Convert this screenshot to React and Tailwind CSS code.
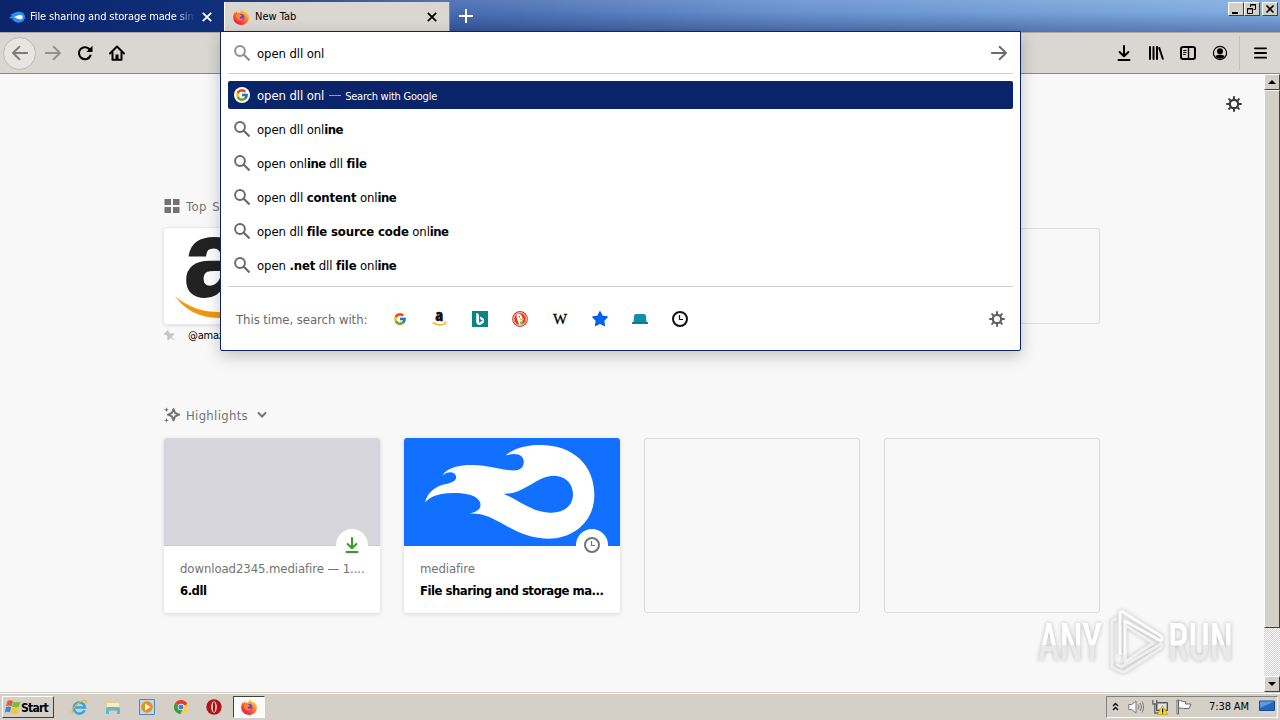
import { FcGoogle } from 'react-icons/fc';
import { BsBing } from 'react-icons/bs';

const suggestions = [
  [['open dll onl'], ['ine', true]],
  [['open onl'], ['ine', true], [' dll '], ['file', true]],
  [['open dll '], ['content', true], [' onl'], ['ine', true]],
  [['open dll '], ['file source code', true], [' onl'], ['ine', true]],
  [['open '], ['.net', true], [' dll '], ['file', true], [' onl'], ['ine', true]],
];

const raised = 'border border-t-white border-l-white border-r-[#404040] border-b-[#404040] bg-[#d4d0c8]';

function SearchIcon({ className }) {
  return (
    <svg viewBox="0 0 16 16" className={`h-4 w-4 shrink-0 ${className}`} fill="none" stroke="currentColor">
      <circle cx="6" cy="6" r="4.900" strokeWidth="2" />
      <path d="M9.800 9.800l5 5" strokeWidth="2.300" strokeLinecap="round" />
    </svg>
  );
}

function GearIcon({ className }) {
  return (
    <svg viewBox="0 0 16 16" className={`h-4 w-4 ${className}`} fill="none" stroke="currentColor" strokeLinecap="round">
      <circle cx="8" cy="8" r="4.200" strokeWidth="2.200" />
      <path
        d="M8 1v2.500M8 12.500V15M1 8h2.500M12.500 8H15M3.100 3.100l1.600 1.600M11.300 11.300l1.600 1.600M12.900 3.100l-1.600 1.600M4.700 11.300l-1.600 1.600"
        strokeWidth="2"
      />
    </svg>
  );
}

function ClockIcon({ className }) {
  return (
    <svg viewBox="0 0 16 16" className={`h-4 w-4 ${className}`} fill="none" stroke="currentColor">
      <circle cx="8" cy="8" r="7" strokeWidth="2" />
      <path d="M7.500 4v4.500H11" strokeWidth="1.200" />
    </svg>
  );
}

function DownloadIcon({ className }) {
  return (
    <svg
      viewBox="0 0 16 16"
      className={`h-4 w-4 ${className}`}
      fill="none"
      stroke="currentColor"
      strokeWidth="2"
      strokeLinecap="round"
      strokeLinejoin="round"
    >
      <path d="M8 1v10M3.600 7L8 11.300 12.400 7M2.500 15h11" />
    </svg>
  );
}

function ArrowIcon({ className }) {
  return (
    <svg
      viewBox="0 0 16 16"
      className={`h-4 w-4 ${className}`}
      fill="none"
      stroke="currentColor"
      strokeWidth="1.900"
      strokeLinecap="round"
      strokeLinejoin="round"
    >
      <path d="M.9 8h14M8.600 1.800L15 8l-6.400 6.200" />
    </svg>
  );
}

function CloseIcon({ className }) {
  return (
    <svg viewBox="0 0 10 10" className={`h-2.5 w-2.5 shrink-0 ${className}`} stroke="currentColor" strokeWidth="1.800">
      <path d="M.8.8l8.400 8.400M9.200.8L.8 9.200" />
    </svg>
  );
}

function FirefoxIcon({ className }) {
  return (
    <svg viewBox="0 0 16 16" className={className}>
      <defs>
        <linearGradient id="fox" x1="0.85" y1="0.1" x2="0.2" y2="0.95">
          <stop offset="0" stopColor="#ffd83a" />
          <stop offset="0.45" stopColor="#ff7a22" />
          <stop offset="0.8" stopColor="#f8323f" />
          <stop offset="1" stopColor="#e01a72" />
        </linearGradient>
      </defs>
      <path
        d="M9 .2c1 1 1.600 2 1.700 2.900 1-.2 1.600.4 2 .8-.1-.6-.2-1-.4-1.400C14.800 4 16 6.400 15.900 8.800 15.700 13 12.300 16 8.100 16 3.700 16 .3 12.800.2 8.600.1 6.400.9 4.400 2 2.900c0 .6.1 1 .3 1.300.5-.8 1.200-1.500 1.900-1.900-.1.700.1 1.300.5 1.700C6.800 3.600 8.600 2.700 9 .2z"
        fill="url(#fox)"
      />
      <circle cx="8.200" cy="8.300" r="3.200" fill="#7a3fd6" />
      <path d="M3.600 5.300c1.500-.8 3-.5 3.800.5l1.500.6c-.3 1-1.900 1-2.300 1.800-.2 1.700 2.600 2.500 4.500.8-1 3-6 3.500-7.600.3-.7-1.400-.6-2.900.1-4z" fill="#ff8a1f" />
    </svg>
  );
}

function AmazonIcon() {
  return (
    <svg viewBox="0 0 16 16" className="h-4 w-4">
      <text x="3.300" y="10" fontFamily="Open Sans" fontWeight="800" fontSize="15.500" textLength="8" lengthAdjust="spacingAndGlyphs" fill="#111" stroke="#111" strokeWidth=".4">
        a
      </text>
      <path d="M1 11.500c4 3 9 3 12.200.8" fill="none" stroke="#f5b22b" strokeWidth="1.600" />
      <path d="M11.800 11c1.200-.2 2-.2 2.500.1 0 1-.3 1.800-1 2.500" fill="none" stroke="#f5b22b" />
    </svg>
  );
}

function TitleBar() {
  return (
    <div className="flex h-8 shrink-0 bg-[linear-gradient(to_bottom,rgba(255,255,255,0.08),rgba(255,255,255,0)_35%,rgba(0,10,80,0.3)),linear-gradient(to_right,#0a246a_0,#0a246a_220px,#486db0_450px,#6a94cf_800px,#84b0e2_1280px)]">
      <div className="flex w-[224px] items-center bg-[linear-gradient(to_right,#0a246a,#10307c)] pt-0.5 pl-[9px] text-[11px] text-white">
        <svg viewBox="0 0 18 16" className="h-4 w-[17px] shrink-0">
          <path d="M0 9c2-1.500 2-1.500 3-2.500C2 5.500 2 5.500 1.500 5 5 5 5.500 3 9.500 2.500 14 2 17 4.500 17 8s-3 6-7 6c-3.500 0-4.500-2-7-3l2-1z" fill="#2c8fef" />
          <path d="M5 8c3-.3 4-2 6.500-2 2 0 3 1 3 2.200 0 1.300-1 2.200-3 2.200C9 10.400 8 8.800 5 8z" fill="#fff" />
        </svg>
        <span className="ml-1 w-[165px] overflow-hidden whitespace-nowrap tracking-[-0.12px] [mask-image:linear-gradient(to_right,#000_146px,transparent_165px)]">
          File sharing and storage made simple
        </span>
        <CloseIcon className="ml-[7px]" />
      </div>
      <div className="mt-0.5 flex w-[226px] items-center border-r border-l border-r-[#8b8883] border-l-white bg-[#dad7d2] pl-2 text-[11px] text-black">
        <FirefoxIcon className="h-4 w-4" />
        <span className="mt-px ml-1.5">New Tab</span>
        <CloseIcon className="mr-3 ml-auto" />
      </div>
      <svg viewBox="0 0 14 14" className="mt-[9px] ml-[9px] h-3.5 w-3.5" stroke="#fff" strokeWidth="2">
        <path d="M7 0v14M0 7h14" />
      </svg>
      <div className="mt-0.5 mr-[2px] ml-auto flex h-[14px]">
        <div className={`${raised} h-[14px] w-4`}>
          <svg viewBox="0 0 14 12" className="h-3 w-3.5">
            <path d="M3 9h6v2H3z" />
          </svg>
        </div>
        <div className={`${raised} h-[14px] w-4`}>
          <svg viewBox="0 0 14 12" className="h-3 w-3.5" fill="none" stroke="#000">
            <path d="M5.500 4V1.500h5v5H8.500M5 2h6M2.500 5.500h5v5h-5zM2 6h6" />
          </svg>
        </div>
        <div className={`${raised} ml-0.5 h-[14px] w-4`}>
          <svg viewBox="0 0 14 12" className="h-3 w-3.5" stroke="#000" strokeWidth="1.600">
            <path d="M3.500 2.500l7 7M10.500 2.500l-7 7" />
          </svg>
        </div>
      </div>
    </div>
  );
}

function Toolbar() {
  return (
    <div className="flex h-[42px] shrink-0 items-center border-t border-b border-t-[#aaa9a8] border-b-[#8b8883] bg-[#dad7d2] text-black">
      <div className="ml-[3px] flex h-[33px] w-[33px] items-center justify-center rounded-full border border-[#bdbab6] bg-[#e7e5e1]">
        <ArrowIcon className="rotate-180 text-[#7d7b78]" />
      </div>
      <ArrowIcon className="ml-[9px] text-[#92908d]" />
      <svg viewBox="0 0 16 16" className="ml-4 h-4 w-4" fill="none" stroke="currentColor" strokeWidth="2.100">
        <path d="M12.700 4.500A6 6 0 1 0 13.500 10.500" strokeLinecap="round" />
        <path d="M15.500.8v6.200H9.300z" fill="currentColor" stroke="none" />
      </svg>
      <svg viewBox="0 0 16 16" className="ml-4 h-4 w-4" fill="none" stroke="currentColor" strokeWidth="2" strokeLinejoin="round">
        <path d="M1 8.500L8 1.500l7 7" strokeLinecap="round" />
        <path d="M3.500 7v7.800h9V7" />
        <path d="M6.500 15V9.500h3V15z" fill="currentColor" stroke="none" />
      </svg>
      <div className="ml-auto flex items-center gap-4">
        <DownloadIcon />
        <svg viewBox="0 0 16 16" className="h-4 w-4" fill="none" stroke="currentColor" strokeWidth="2" strokeLinecap="round">
          <path d="M2 2v12M5.500 2v12M9 2v12M11.300 3l3.500 10.800" />
        </svg>
        <svg viewBox="0 0 16 16" className="h-4 w-4" fill="none" stroke="currentColor">
          <rect x="1" y="2" width="14" height="12" rx="2" strokeWidth="2" />
          <path d="M8.500 2v12" strokeWidth="1.400" />
          <path d="M3.200 5.500h3.300M3.200 7.500h3.300M3.200 9.500h2.500" />
        </svg>
        <svg viewBox="0 0 16 16" className="h-4 w-4">
          <circle cx="8" cy="8" r="6.600" fill="none" stroke="#000" strokeWidth="1.200" />
          <circle cx="8" cy="6.200" r="3" />
          <path d="M3.300 11.200c1.500-2 7.900-2 9.400 0C11.500 13 10 13.700 8 13.700s-3.500-.7-4.700-2.500z" />
        </svg>
      </div>
      <div className="ml-[11px] h-[34px] w-px bg-[#c3c0bb]" />
      <svg viewBox="0 0 14 14" className="mr-[13px] ml-3.5 h-3.5 w-[13px]" stroke="#000" strokeWidth="2" strokeLinecap="round">
        <path d="M1 2h12M1 7h12M1 12h12" />
      </svg>
    </div>
  );
}

function UrlPopup() {
  return (
    <div className="absolute top-[31px] left-[220px] flex h-[320px] w-[801px] flex-col rounded-b-[2px] border border-[#0a246a] bg-white px-[7px] text-[13px] text-black shadow-[0_5px_16px_rgba(0,0,0,0.22)]">
      <div className="flex h-[42px] shrink-0 items-center border-b border-[#cfcfcf] pr-[6px] pl-[6px]">
        <SearchIcon className="text-[#909090]" />
        <span className="mt-0.5 ml-[7px] tracking-[-0.1px]">open dll onl</span>
        <ArrowIcon className="ml-auto text-[#6b6b6b]" />
      </div>
      <div className="mt-[7px] flex h-7 shrink-0 items-center rounded-[2px] bg-[#0a246a] pl-[6px] text-white">
        <div className="flex h-4 w-4 items-center justify-center rounded-full bg-white">
          <FcGoogle className="h-3.5 w-3.5" />
        </div>
        <span className="mt-0.5 ml-[7px] tracking-[-0.1px]">open dll onl</span>
        <span className="mr-1 ml-[5px] h-px w-3 bg-[#8f9bc0]" />
        <span className="mt-[5px] text-[11px] tracking-[-0.24px]">Search with Google</span>
      </div>
      <div className="flex flex-col gap-1.5 pt-1.5">
        {suggestions.map((parts, i) => (
          <div key={i} className="flex h-7 items-center pl-[6px]">
            <SearchIcon className="text-[#6b6b6b]" />
            <span className="mt-0.5 ml-[7px] tracking-[-0.1px] whitespace-pre">
              {parts.map(([text, bold], j) =>
                bold ? (
                  <b key={j} className={text.length > 3 ? 'font-bold tracking-[-0.15px]' : 'font-bold tracking-[-0.55px]'}>
                    {text}
                  </b>
                ) : (
                  text
                ),
              )}
            </span>
          </div>
        ))}
      </div>
      <div className="mt-[7px] flex h-[65px] items-center border-t border-[#cfcfcf] pl-2">
        <span className="mt-0.5 w-[156px] tracking-[-0.06px] whitespace-nowrap text-[#696969]">This time, search with:</span>
        <div className="flex items-center gap-6">
          <div className="flex h-4 w-4 items-center justify-center">
            <FcGoogle className="h-3.5 w-3.5" />
          </div>
          <AmazonIcon />
          <div className="flex h-4 w-4 items-center justify-center bg-[#0c8484]">
            <BsBing className="h-3 w-3 text-white" />
          </div>
          <svg viewBox="0 0 16 16" className="h-4 w-4">
            <circle cx="8" cy="8" r="7.900" fill="#de3a1e" />
            <circle cx="8" cy="8" r="6.300" fill="none" stroke="#fff" strokeWidth=".9" />
            <path d="M4.800 3.500c2.500-1.300 5.400.5 5.700 3.500l-.3 6.300-3 .5C6 10 3.800 6 4.800 3.500z" fill="#fff" />
            <path d="M8 7.500l4.200.3-1 1.600-3.200-.2z" fill="#fdc20a" />
            <path d="M7.800 10.500l3.500.5-.5 2.300-3-.7z" fill="#5fb946" />
            <circle cx="7.300" cy="5.700" r=".7" fill="#2d4f8e" />
          </svg>
          <div className="flex h-4 w-4 items-center justify-center font-['Liberation_Serif',serif] text-[15px] tracking-normal">
            <span className="mt-0.5 [-webkit-text-stroke:0.3px_#000]">W</span>
          </div>
          <svg viewBox="0 0 16 16" className="h-4 w-4">
            <path
              d="M8 .8l2.200 4.500 4.900.7-3.500 3.500.8 5L8 12.200l-4.400 2.300.8-5L.9 6l4.900-.7z"
              fill="#0060f0"
              stroke="#0060f0"
              strokeWidth="1.400"
              strokeLinejoin="round"
            />
          </svg>
          <svg viewBox="0 0 16 16" className="h-4 w-4" fill="#0e8fa3">
            <path d="M1.500 11.500L2 5Q2.200 3 4.200 3h7.600Q13.800 3 14 5l.5 6.500z" />
            <path d="M0 11h16v2H0z" fill="#0a7f92" />
          </svg>
          <ClockIcon className="text-[#111]" />
        </div>
        <GearIcon className="mr-2 ml-auto text-[#606060]" />
      </div>
    </div>
  );
}

function HighlightCard({ site, title, image, badge }) {
  return (
    <div className="relative flex h-[175px] w-[216px] flex-col rounded-[3px] bg-white shadow-[0_1px_4px_rgba(12,12,13,0.15)]">
      <div className="h-[108px] overflow-hidden rounded-t-[3px]">{image}</div>
      <div className="absolute top-[91px] right-3 flex h-8 w-8 items-center justify-center rounded-full bg-white">{badge}</div>
      <div className="relative px-4 pt-[15px] leading-4">
        <div className="text-[13px] tracking-[-0.08px] whitespace-nowrap text-[#737373]">{site}</div>
        <div className="mt-1.5 text-[13px] font-bold tracking-[-0.5px] whitespace-nowrap text-black">{title}</div>
      </div>
    </div>
  );
}

function MediafireArt() {
  return (
    <svg viewBox="42 114 648 324" className="h-[108px] w-[216px] bg-[#1170ff]">
      <path
        d="M105 308C112 275 140 258 165 253C190 248 201 240 198 228C194 214 173 212 157 227C175 195 235 192 280 197C320 202 355 214 380 211C402 207 405 185 398 173C389 159 365 161 347 166C375 141 420 135 450 135C550 135 613 195 613 285C613 365 550 416 475 416C400 416 350 375 300 352C275 342 258 340 236 341C262 337 276 325 270 307C262 285 225 278 185 279C150 281 120 288 105 308Z"
        fill="#fff"
      />
      <path d="M340 281C400 285 440 227 492 227C527 227 549 252 549 282C549 317 522 338 485 338C430 340 385 300 340 281Z" fill="#1170ff" />
    </svg>
  );
}

function NewTabPage() {
  return (
    <div className="relative min-w-0 flex-1 bg-[#f8f8f8] pt-[116px] pl-[164px] text-[#737373]">
      <GearIcon className="absolute top-[22px] left-[1226px] text-[#3c3c3c]" />
      <div className="flex h-8 items-center text-[13px] tracking-[0.5px]">
        <svg viewBox="0 0 16 16" className="mr-1.5 h-4 w-4" fill="currentColor">
          <path d="M.5 1h6.500v6H.5zM9 1h6.500v6H9zM.5 9h6.500v6H.5zM9 9h6.500v6H9z" />
        </svg>
        <span className="mt-0.5 [word-spacing:1px]">Top Sites</span>
      </div>
      <div className="mt-[6px] flex gap-6">
        <div className="h-24 w-[216px] overflow-hidden rounded-[3px] bg-white shadow-[0_0_0_1px_#e9e9e9,0_1px_4px_rgba(12,12,13,0.15)]">
          <svg viewBox="0 0 216 96" className="h-24 w-[216px]">
            <text x="20" y="68" fontFamily="Liberation Sans" fontWeight="700" fontSize="108" fill="#222" stroke="#222" strokeWidth="2">
              a
            </text>
            <path d="M11 68c14 12 28 16 44 16 17 0 32-5 42-11v6c-14 8-28 11-42 11-20 0-35-9-44-22z" fill="#f0980c" />
          </svg>
        </div>
        <div className="h-24 w-[216px] rounded-[3px] border border-[#dcdcdc]" />
        <div className="h-24 w-[216px] rounded-[3px] border border-[#dcdcdc]" />
        <div className="h-24 w-[216px] rounded-[3px] border border-[#dcdcdc]" />
      </div>
      <div className="mt-1 flex h-4 items-center text-[11px] tracking-[-0.2px] text-black">
        <svg viewBox="0 0 12 12" className="mr-3 h-3 w-3 -rotate-45 text-[#c6c6c6]" fill="currentColor">
          <path d="M3 0h6v1.500H8v3l2.500 2v1.300h-4V12h-1V7.800h-4V6.500L4 4.500v-3H3z" />
        </svg>
        @amazon
      </div>
      <div className="mt-[55px] flex h-8 items-center text-[13px] tracking-[0.3px]">
        <svg viewBox="0 0 16 16" className="mr-1.5 h-4 w-4" fill="none" stroke="currentColor" strokeWidth="2" strokeLinejoin="round">
          <path d="M9.500 2l1.600 4 4 1.700-4 1.700-1.600 4-1.600-4-4-1.700 4-1.700z" />
          <path d="M2.500.3l.7 1.700 1.700.7-1.700.7-.7 1.600-.7-1.600L.1 2.700 1.800 2zM2.500 11l.7 1.700 1.700.7-1.700.7-.7 1.600-.7-1.600-1.700-.7 1.700-.7z" fill="currentColor" stroke="none" />
        </svg>
        <span className="mt-0.5">Highlights</span>
        <svg viewBox="0 0 10 10" className="ml-[9px] h-2.5 w-2.5" fill="none" stroke="currentColor" strokeWidth="2">
          <path d="M1.500 3L5 6.500 8.500 3" strokeLinecap="round" />
        </svg>
      </div>
      <div className="mt-[7px] flex gap-6">
        <HighlightCard
          site="download2345.mediafire — 1...."
          title="6.dll"
          image={<div className="h-full border-b border-[#c9c8cd] bg-[#d7d6dc]" />}
          badge={<DownloadIcon className="text-[#2fa01d]" />}
        />
        <HighlightCard
          site="mediafire"
          title="File sharing and storage ma..."
          image={<MediafireArt />}
          badge={<ClockIcon className="text-[#737373]" />}
        />
        <div className="h-[175px] w-[216px] rounded-[3px] border border-[#dcdcdc]" />
        <div className="h-[175px] w-[216px] rounded-[3px] border border-[#dcdcdc]" />
      </div>
    </div>
  );
}

function Scrollbar() {
  return (
    <div className="flex w-4 shrink-0 flex-col bg-[repeating-conic-gradient(#d4d0c8_0_25%,#fff_0_50%)] bg-[length:2px_2px]">
      <div className={`${raised} flex h-4 items-center justify-center`}>
        <svg viewBox="0 0 8 4" className="h-1 w-2">
          <path d="M4 0l4 4H0z" />
        </svg>
      </div>
      <div className={`${raised} h-[538px]`} />
      <div className={`${raised} mt-auto flex h-4 items-center justify-center`}>
        <svg viewBox="0 0 8 4" className="h-1 w-2">
          <path d="M0 0h8L4 4z" />
        </svg>
      </div>
    </div>
  );
}

function Watermark() {
  return (
    <svg
      viewBox="0 0 204 72"
      className="absolute top-[605px] left-[1033px] h-[72px] w-[204px] [filter:drop-shadow(0_0_2px_rgba(0,0,0,0.25))]"
      fontFamily="Roboto"
      fontSize="52"
      fontWeight="500"
    >
      <defs>
        <linearGradient id="wm" x1="0" y1="0" x2="0" y2="1">
          <stop offset="0.53" stopColor="#fff" />
          <stop offset="0.55" stopColor="#e9e9e9" />
        </linearGradient>
      </defs>
      <text x="5" y="55" textLength="64" lengthAdjust="spacingAndGlyphs" fill="url(#wm)">
        ANY
      </text>
      <text x="135" y="55" textLength="65" lengthAdjust="spacingAndGlyphs" fill="url(#wm)">
        RUN
      </text>
      <g fill="none" strokeLinejoin="round" strokeWidth="3">
        <path d="M87 50V8q0-2 3-1l38 24q2 3 0 5L92 16v38" stroke="#fbfbfb" />
        <path d="M92 20l28 18-28 19v-8" stroke="#f0f0f0" />
        <path d="M84 14q-5 0-5 4v44l10 5q2 0 4-1l35-23q2-2 0-4L88 62l-5-3" stroke="#efefef" />
      </g>
    </svg>
  );
}

function Taskbar() {
  return (
    <div className="flex h-7 shrink-0 items-center border-t border-[#d4d0c8] bg-[#d4d0c8] pt-px text-[11px] text-black shadow-[inset_0_1px_0_#fff]">
      <div className={`${raised} ml-0.5 flex h-[22px] w-[52px] items-center pl-0.5`}>
        <svg viewBox="0 0 16 16" className="h-4 w-4 shrink-0">
          <path d="M2.500 2c2-1.200 3.500-1 5.500 0L6.500 7.200c-1.500-1-3.500-1-5.500 0z" fill="#e8592b" />
          <path d="M8.500 2.500c2 1.200 4.500 1 7 0l-1.500 5.200c-2 1-4.500 1-7 0z" fill="#7cbc3c" />
          <path d="M1 8.300c2-1.200 3.500-1 5.300 0L4.800 13.500c-1.500-1-3-1-5 0z" fill="#3b87dc" />
          <path d="M7 8.700c2 1.200 4.500 1 7 0l-1.300 5.200c-2 1-4.500 1-7 0z" fill="#fbc52c" />
        </svg>
        <span className="mt-px text-[12px] font-bold tracking-[-0.75px]">Start</span>
      </div>
      <div className="ml-[17px] flex items-center gap-[18px]">
        <svg viewBox="0 0 16 16" className="h-4 w-4" fill="none">
          <path d="M13.600 11.200A5.600 5.600 0 1 1 14 8.500H4" stroke="#3aa5e4" strokeWidth="2.600" />
          <path d="M1.500 14.500C-1 11 9 .5 14.800 1.500c1 .5.600 2-.3 3.200" stroke="#e5b83c" strokeWidth="1.200" />
        </svg>
        <svg viewBox="0 0 16 16" className="h-4 w-4">
          <path d="M1 2h5l1 1.500h7V13H1z" fill="#e8cf79" />
          <path d="M2 4h12v6H2z" fill="#fbeeb5" />
          <path d="M1 15V9.500Q1 8 3 8h10q2 0 2 1.500V15h-3v-3.500H4V15z" fill="#62b4dc" />
        </svg>
        <svg viewBox="0 0 16 16" className="h-4 w-4">
          <path d="M.5.500h15v15H.5z" fill="#b9d9ee" stroke="#4a8cc0" />
          <circle cx="8" cy="8" r="5.800" fill="#f58a14" />
          <path d="M6 4.500v7L11.500 8z" fill="#fff" />
        </svg>
        <svg viewBox="0 0 16 16" className="h-4 w-4">
          <circle cx="8" cy="8" r="7" fill="#fdcd3d" />
          <path d="M8 8L1.900 4.500A7 7 0 0 1 14.200 4.600L13 6H8z" fill="#e2402e" />
          <path d="M1.900 4.500A7 7 0 0 0 7.500 15L10 9.500 8 8z" fill="#2fa04c" />
          <circle cx="8" cy="8" r="3.200" fill="#fff" />
          <circle cx="8" cy="8" r="2.500" fill="#3f7de8" />
        </svg>
        <svg viewBox="0 0 16 16" className="-ml-px h-4 w-4">
          <circle cx="8" cy="8" r="7.700" fill="#b3141c" />
          <ellipse cx="8" cy="8" rx="2.800" ry="5.800" fill="#f0e6e4" />
          <ellipse cx="8" cy="8" rx="1.300" ry="5" fill="#a0141a" />
        </svg>
      </div>
      <div className="ml-[11px] flex h-[22px] w-8 items-center justify-center border border-t-[#404040] border-r-white border-b-white border-l-[#404040] bg-[#fcfbfb]">
        <FirefoxIcon className="h-4 w-4" />
      </div>
      <div className="mr-0.5 ml-auto flex h-[22px] w-[172px] items-center border border-t-[#808080] border-r-white border-b-white border-l-[#808080] pl-[5px]">
        <svg viewBox="0 0 7 9" className="mb-0.5 h-[9px] w-[7px]" fill="none" stroke="#000" strokeWidth="1.300">
          <path d="M1 4l2.500-2.500L6 4M1 8l2.500-2.500L6 8" />
        </svg>
        <svg viewBox="0 0 16 16" className="ml-[9px] h-4 w-4" fill="none" stroke="#777">
          <path d="M.8 5.500h3L8 2v12L3.800 10.500h-3z" fill="#fff" />
          <path d="M10 5.500c1 1.500 1 3.500 0 5M12 4c1.800 2.500 1.800 5.500 0 8M14 2.500c2 3 2 8 0 11" />
        </svg>
        <svg viewBox="0 0 16 16" className="ml-2 h-4 w-4">
          <path d="M4.500 3.500h11v8h-11z" fill="#9ba3a6" stroke="#555" />
          <path d="M6 5h8v5H6z" fill="#dfe6e8" />
          <path d="M.8 1v4h4V1M2.800 5v9h5" fill="none" stroke="#666" strokeWidth="1.300" />
          <path d="M10.500 6.500l5.300 9H5.200z" fill="#ffd91c" stroke="#b98f00" strokeWidth=".6" />
          <path d="M10 9.500h1.200V13H10zM10 13.600h1.200v1H10z" />
        </svg>
        <svg viewBox="0 0 16 16" className="ml-2 h-4 w-4" fill="#fff" stroke="#666">
          <path d="M1 1h1.500v14H1z" />
          <path d="M2.500 2c3-1.500 4 1.500 7 .5V5h5.500l-2 4.500H9c-2 .5-4-1.500-6.500 0z" />
        </svg>
        <span className="mt-px ml-[17px] tracking-[-0.1px] whitespace-nowrap">7:38 AM</span>
        <svg viewBox="0 0 16 14" className="mr-0.5 ml-auto h-3.5 w-4">
          <path d="M.5 1h15v9.500H.5z" fill="#2468c0" stroke="#184a92" />
          <path d="M1 1.500h14L1 8z" fill="#5a9be4" />
          <path d="M3 11.500h10v1.500H3z" fill="#cfd8e0" />
        </svg>
      </div>
    </div>
  );
}

export default function App() {
  return (
    <div className="relative flex h-[720px] w-[1280px] flex-col overflow-hidden font-['DejaVu_Sans_Condensed','DejaVu_Sans',sans-serif] [font-stretch:semi-condensed]">
      <TitleBar />
      <Toolbar />
      <div className="flex h-[618px] shrink-0">
        <NewTabPage />
        <Scrollbar />
      </div>
      <Taskbar />
      <UrlPopup />
      <Watermark />
    </div>
  );
}
